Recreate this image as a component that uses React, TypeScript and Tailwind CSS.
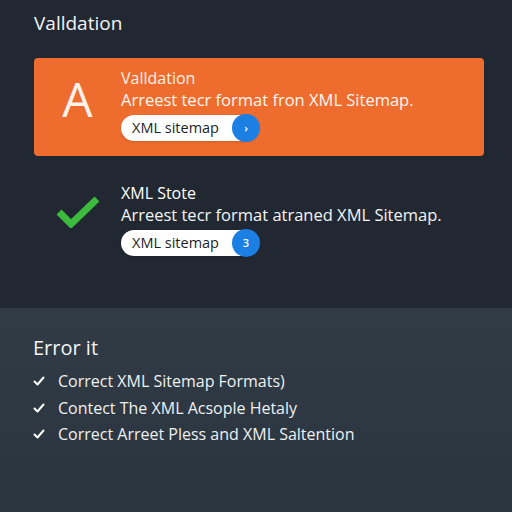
import React from 'react';

const Pill: React.FC<{ badge: string }> = ({ badge }) => (
  <div className="flex items-center h-[26px] w-[138px] bg-white rounded-full pl-[11px] shadow-sm">
    <span className="text-[14.5px] text-[#1c1f24] flex-1 leading-none">XML sitemap</span>
    <span className="w-[28px] h-[28px] -mr-[1px] rounded-full bg-[#1b7fe3] text-white text-[11px] font-semibold flex items-center justify-center">
      {badge}
    </span>
  </div>
);

const Check: React.FC = () => (
  <svg width="12" height="12" viewBox="0 0 12 12" fill="none">
    <path d="M1.5 6.5 L4.5 9.5 L10.5 2.5" stroke="#ffffff" strokeWidth="2" strokeLinecap="round" strokeLinejoin="round" />
  </svg>
);

const App: React.FC = () => {
  const fixes = [
    'Correct XML Sitemap Formats)',
    'Contect The XML Acsople Hetaly',
    'Correct Arreet Pless and XML Saltention'
  ];

  return (
    <div className="w-[512px] h-[512px] flex flex-col bg-[#212831] text-white" style={{ fontFamily: '"Open Sans", "Noto Sans", sans-serif' }}>
      {/* Validation */}
      <div className="h-[308px] pl-[34px] pr-[28px] pt-[8px]">
        <h1 className="text-[19px] leading-[30px] text-[#f3f4f6]">Valldation</h1>

        <div className="mt-[20px] h-[98px] bg-[#ee6c2e] rounded-[4px] flex items-start">
          <div className="w-[87px] h-full flex items-center justify-center">
            <span className="text-[48px] leading-none text-[#fdf3ec] -mt-[16px]">A</span>
          </div>
          <div className="flex flex-col pt-[10px]">
            <span className="text-[16px] leading-[21px] text-[#fdf1e8]">Valldation</span>
            <span className="text-[16.5px] leading-[22px] text-[#fff7f0]">Arreest tecr format fron XML Sitemap.</span>
            <div className="mt-[4px]"><Pill badge="›" /></div>
          </div>
        </div>

        <div className="mt-[27px] flex items-start">
          <div className="w-[87px] flex justify-center pt-[11px]">
            <svg width="44" height="34" viewBox="0 0 44 34" fill="none">
              <path d="M3 18 L15 30 L41 5" stroke="#3dbb3f" strokeWidth="7" strokeLinejoin="miter" />
            </svg>
          </div>
          <div className="flex flex-col">
            <span className="text-[16px] leading-[21px] text-white">XML Stote</span>
            <span className="text-[16.5px] leading-[22px] text-[#f3f4f6]">Arreest tecr format atraned XML Sitemap.</span>
            <div className="mt-[4px]"><Pill badge="3" /></div>
          </div>
        </div>
      </div>

      {/* Error list */}
      <div className="flex-1 bg-gradient-to-b from-[#303b45] to-[#2b353f] pl-[33px] pt-[26px]">
        <h2 className="text-[20px] leading-[28px] text-[#f3f4f6]">Error it</h2>
        <ul className="mt-[6px] flex flex-col">
          {fixes.map((f, i) => (
            <li key={i} className="flex items-center h-[26.5px]">
              <span className="w-[25px] flex"><Check /></span>
              <span className="text-[16px] text-[#eef0f2]">{f}</span>
            </li>
          ))}
        </ul>
      </div>
    </div>
  );
};

export default App;
